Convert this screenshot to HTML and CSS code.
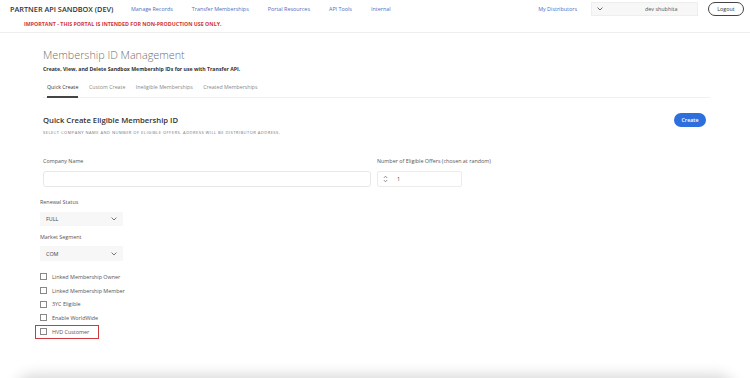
FILE: index.html
```html
<!DOCTYPE html>
<html lang="en">
<head>
  <meta charset="UTF-8">
  <meta name="viewport" content="width=device-width, initial-scale=1.0">
  <title>Partner API Sandbox</title>
  <link rel="stylesheet" href="styles.css">
</head>
<body>
  <header class="top-bar">
    <div class="top-row">
      <div class="brand">PARTNER API SANDBOX (DEV)</div>
      <nav class="nav-links">
        <a href="#">Manage Records</a>
        <a href="#">Transfer Memberships</a>
        <a href="#">Portal Resources</a>
        <a href="#">API Tools</a>
        <a href="#">Internal</a>
      </nav>
      <div class="user-area">
        <a href="#" class="dist-link">My Distributors</a>
        <div class="dist-select">
          <svg width="6" height="4" viewBox="0 0 6 4"><path d="M0.6 0.6 L3 3 L5.4 0.6" fill="none" stroke="#555" stroke-width="0.9"/></svg>
          <span>dev shubhita</span>
        </div>
        <button class="logout-btn">Logout</button>
      </div>
    </div>
    <div class="warning">IMPORTANT - THIS PORTAL IS INTENDED FOR NON-PRODUCTION USE ONLY.</div>
  </header>

  <main class="content">
    <h1 class="page-title">Membership ID Management</h1>
    <p class="page-sub">Create, View, and Delete Sandbox Membership IDs for use with Transfer API.</p>

    <div class="tabs">
      <a href="#" class="tab active">Quick Create</a>
      <a href="#" class="tab">Custom Create</a>
      <a href="#" class="tab">Ineligible Memberships</a>
      <a href="#" class="tab">Created Memberships</a>
    </div>

    <div class="section-head">
      <h2>Quick Create Eligible Membership ID</h2>
      <button class="create-btn">Create</button>
    </div>
    <p class="section-note">SELECT COMPANY NAME AND NUMBER OF ELIGIBLE OFFERS. ADDRESS WILL BE DISTRIBUTOR ADDRESS.</p>

    <div class="field-row">
      <div class="field company">
        <label>Company Name</label>
        <div class="text-input"></div>
      </div>
      <div class="field offers">
        <label>Number of Eligible Offers (chosen at random)</label>
        <div class="num-input">
          <svg width="5" height="8" viewBox="0 0 5 8"><path d="M0.8 3 L2.5 1.2 L4.2 3 M0.8 5 L2.5 6.8 L4.2 5" fill="none" stroke="#666" stroke-width="0.7"/></svg>
          <span>1</span>
        </div>
      </div>
    </div>

    <div class="options">
      <label class="opt-label">Renewal Status</label>
      <div class="select-box first">
        <span>FULL</span>
        <svg width="6" height="4" viewBox="0 0 6 4"><path d="M0.6 0.6 L3 3 L5.4 0.6" fill="none" stroke="#666" stroke-width="0.9"/></svg>
      </div>
      <label class="opt-label">Market Segment</label>
      <div class="select-box">
        <span>COM</span>
        <svg width="6" height="4" viewBox="0 0 6 4"><path d="M0.6 0.6 L3 3 L5.4 0.6" fill="none" stroke="#666" stroke-width="0.9"/></svg>
      </div>

      <div class="checks">
        <div class="check"><span class="box"></span>Linked Membership Owner</div>
        <div class="check"><span class="box"></span>Linked Membership Member</div>
        <div class="check"><span class="box"></span>3YC Eligible</div>
        <div class="check"><span class="box"></span>Enable WorldWide</div>
        <div class="check highlight"><span class="box"></span>HVD Customer</div>
      </div>
    </div>
  </main>

  <div class="footer-shadow"></div>
</body>
</html>
```

FILE: styles.css
```css
/* Base */
body {
  margin: 0;
  font-family: "Open Sans", "Noto Sans", sans-serif;
  color: #444;
  background: #fff;
  overflow: hidden;
  height: 378px;
}

a {
  text-decoration: none;
}

/* Header */
.top-bar {
  height: 32px;
  border-bottom: 1px solid #eee;
}

.top-row {
  display: flex;
  align-items: center;
  height: 18px;
  padding: 0 6px 0 10px;
}

.brand {
  font-size: 7.3px;
  font-weight: 600;
  color: #333;
  width: 121px;
  white-space: nowrap;
}

.nav-links {
  display: flex;
  gap: 19px;
}

.nav-links a,
.dist-link {
  font-size: 5.4px;
  color: #4a6fc4;
  white-space: nowrap;
}

.user-area {
  margin-left: auto;
  display: flex;
  align-items: center;
}

.dist-select {
  margin-left: 14px;
  width: 107px;
  height: 14px;
  box-sizing: border-box;
  background: #f7f7f7;
  border: 1px solid #eee;
  display: flex;
  align-items: center;
  padding-left: 5px;
}

.dist-select span {
  font-size: 5.4px;
  color: #555;
  margin-left: 42px;
}

.logout-btn {
  margin-left: 10px;
  width: 36px;
  height: 14px;
  border: 1px solid #444;
  border-radius: 8px;
  background: #fff;
  font-family: inherit;
  font-size: 5.4px;
  color: #333;
  padding: 0;
}

.warning {
  padding-left: 24px;
  margin-top: 2px;
  font-size: 5.3px;
  font-weight: 700;
  color: #d0353a;
  line-height: 8px;
}

/* Main content */
.content {
  padding: 0 44px 0 43px;
}

.page-title {
  margin: 14px 0 0;
  font-size: 10.8px;
  font-weight: 300;
  line-height: 16px;
  color: #707070;
}

.page-sub {
  margin: 2px 0 0;
  font-size: 5.2px;
  font-weight: 700;
  line-height: 8px;
  color: #333;
}

.tabs {
  display: flex;
  gap: 10.5px;
  margin-top: 10px;
  margin-right: -4px;
  padding-left: 4px;
  border-bottom: 1px solid #f0f0f0;
}

.tab {
  font-size: 5.25px;
  line-height: 8px;
  color: #888;
  padding-bottom: 5px;
  margin-bottom: -1px;
  border-bottom: 2px solid transparent;
}

.tab.active {
  color: #333;
  border-bottom-color: #444;
}

.section-head {
  display: flex;
  justify-content: space-between;
  align-items: center;
  margin-top: 15px;
  height: 14px;
}

.section-head h2 {
  margin: 0;
  font-size: 7.7px;
  font-weight: 600;
  color: #333;
}

.create-btn {
  width: 32px;
  height: 14px;
  border: none;
  border-radius: 7px;
  background: #2d6fdc;
  color: #fff;
  font-family: inherit;
  font-size: 5.4px;
  font-weight: 600;
  padding: 0;
}

.section-note {
  margin: 2px 0 0;
  font-size: 4.1px;
  letter-spacing: 0.45px;
  line-height: 8px;
  color: #777;
}

/* Fields */
.field-row {
  display: flex;
  gap: 6px;
  margin-top: 20px;
}

.field label {
  display: block;
  font-size: 5.4px;
  line-height: 8px;
  color: #555;
}

.company {
  width: 328px;
}

.text-input {
  margin-top: 6px;
  height: 16px;
  box-sizing: border-box;
  border: 1px solid #e8e8e8;
  border-radius: 3px;
}

.num-input {
  margin-top: 6px;
  width: 85px;
  height: 16px;
  box-sizing: border-box;
  border: 1px solid #ececec;
  border-radius: 2px;
  display: flex;
  align-items: center;
  padding-left: 5px;
}

.num-input span {
  font-size: 5.4px;
  color: #444;
  margin-left: 9px;
}

.options {
  margin-left: -3px;
  margin-top: 11px;
}

.opt-label {
  display: block;
  font-size: 5.4px;
  line-height: 8px;
  color: #555;
}

.select-box {
  margin-top: 5px;
  margin-bottom: 7px;
  width: 83px;
  height: 15px;
  box-sizing: border-box;
  background: #f7f7f7;
  display: flex;
  align-items: center;
  justify-content: space-between;
  padding: 0 6px 0 6px;
}

.select-box.first {
  margin-top: 6px;
  height: 14px;
}

.select-box span {
  font-size: 5.4px;
  color: #444;
}

.checks {
  margin-top: 9px;
  display: flex;
  flex-direction: column;
}

.check {
  display: flex;
  align-items: center;
  height: 13.7px;
  font-size: 5.4px;
  color: #555;
}

.box {
  width: 5px;
  height: 5px;
  border: 1px solid #888;
  margin-right: 5px;
}

.check.highlight {
  margin-left: -5px;
  padding-left: 4px;
  width: 58px;
  border: 1px solid #cc3a3f;
  height: 12px;
}

/* Bottom edge: shadow of the panel below the fold */
.footer-shadow {
  margin: 42px 22px 0;
  height: 40px;
  border-radius: 10px;
  background: #e4e4e4;
  box-shadow: 0 0 14px 6px rgba(0, 0, 0, 0.16);
}
```
